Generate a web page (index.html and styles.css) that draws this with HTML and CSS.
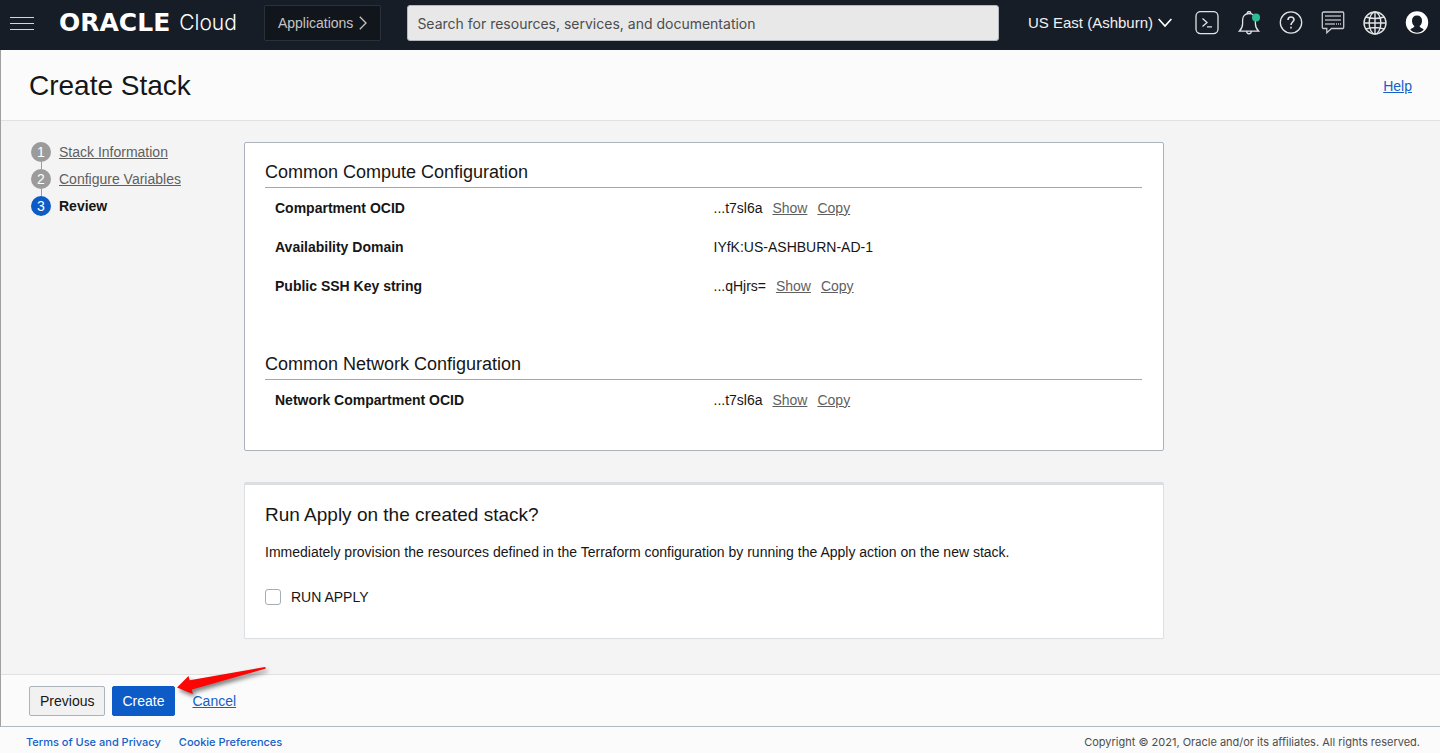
FILE: index.html
```html
<!DOCTYPE html>
<html lang="en">
<head>
<meta charset="utf-8">
<meta name="viewport" content="width=device-width, initial-scale=1">
<title>Create Stack</title>
<link rel="stylesheet" href="styles.css">
</head>
<body>
<header class="topbar">
  <button class="icon-btn menu-btn" type="button" aria-label="Navigation menu">
    <svg width="24" height="15" viewBox="0 0 24 15" fill="none" stroke="#d5d6d8"><path d="M0 1.500h24M0 7.500h24M0 13.500h24"/></svg>
  </button>
  <a class="brand" href="#"><span class="brand-name">ORACLE</span><span class="brand-product">Cloud</span></a>
  <button class="apps-btn" type="button">Applications
    <svg width="8" height="14" viewBox="0 0 8 14" fill="none" stroke="#c4c5c7" stroke-width="1.300"><path d="M.8.8 7 7 .8 13.200"/></svg>
  </button>
  <input class="search" type="search" aria-label="Search" placeholder="Search for resources, services, and documentation">
  <div class="tools">
    <button class="region-btn" type="button">US East (Ashburn)
      <svg width="14" height="10" viewBox="0 0 14 10" fill="none" stroke="#fff" stroke-width="1.700"><path d="m.6 1 6.400 7 6.400-7"/></svg>
    </button>
    <button class="icon-btn" type="button" aria-label="Cloud Shell">
      <svg width="24" height="24" viewBox="0 0 24 24" fill="none" stroke="#e2e3e5" stroke-width="1.300"><rect x="1" y=".6" width="22" height="22" rx="4.500"/><path d="m7.500 7.500 4.500 4-4.500 4M12 15.800h5"/></svg>
    </button>
    <button class="icon-btn" type="button" aria-label="Announcements">
      <svg width="24" height="24" viewBox="0 0 24 24" fill="none" stroke="#e2e3e5" stroke-width="1.300"><path d="M2.300 20.200h19.400c-2-2-3.300-4.500-3.300-7.500V9c0-3.700-2.300-6.500-6.400-6.500S5.600 5.300 5.600 9v3.700c0 3-1.300 5.500-3.300 7.500ZM10.200 2.500c0-2.600 3.600-2.600 3.600 0M9.700 20.500c.2 3 4.400 3 4.600 0"/><circle cx="19" cy="6.500" r="4" fill="#2dbd96" stroke="none"/></svg>
    </button>
    <button class="icon-btn" type="button" aria-label="Help menu">
      <svg width="24" height="24" viewBox="0 0 24 24" fill="none" stroke="#e2e3e5" stroke-width="1.300"><circle cx="12" cy="11.500" r="10.700"/><path stroke-width="1.600" d="M9 9c0-4 6-4 6-.4 0 2.300-3 2.600-3 5.300M12 15.700v1.700"/></svg>
    </button>
    <button class="icon-btn" type="button" aria-label="Feedback">
      <svg width="24" height="24" viewBox="0 0 24 24" fill="none" stroke="#c9cacd" stroke-width="1.300"><path d="M2.500 1h19.200q1 0 1 1.300v13.900q0 1.300-1 1.300H10.500L5.800 21.800v-4.300H2.500q-1.200 0-1.200-1.300V2.300Q1.300 1 2.500 1Z"/><path stroke="#a9abb0" stroke-width="1.600" d="M4 5h16M4 9h16M4 13h10"/><path stroke-dasharray="1 1" d="M15 13h5"/></svg>
    </button>
    <button class="icon-btn" type="button" aria-label="Language">
      <svg width="24" height="24" viewBox="0 0 24 24" fill="none" stroke="#e2e3e5" stroke-width="1.400"><circle cx="12" cy="12" r="11"/><ellipse cx="12" cy="12" rx="5.800" ry="11"/><path d="M12 1v22M1 12h22M3 6q9 3 18 0M3 18q9-3 18 0"/></svg>
    </button>
    <button class="icon-btn" type="button" aria-label="Profile">
      <svg width="24" height="24" viewBox="0 0 24 24"><circle cx="12" cy="11.500" r="11.200" fill="#fff"/><path fill="#171d27" d="M12 4.500c-3.200 0-5 2-5 5.200 0 2.300 1 4.300 2.500 5.400-.3 1.800-2.700 2-4.300 3.600A9.500 9.500 0 0 0 12 21.800a9.500 9.500 0 0 0 6.800-3.100c-1.600-1.600-4-1.800-4.300-3.600 1.500-1.100 2.500-3.100 2.500-5.400 0-3.200-1.800-5.200-5-5.200Z"/></svg>
    </button>
  </div>
</header>

<div class="page">
  <div class="page-head">
    <h1>Create Stack</h1>
    <a class="link" href="#">Help</a>
  </div>

  <div class="workspace">
    <nav aria-label="Steps">
      <ol class="steps">
        <li><span class="step-num">1</span><a href="#">Stack Information</a></li>
        <li><span class="step-num">2</span><a href="#">Configure Variables</a></li>
        <li class="current" aria-current="step"><span class="step-num">3</span><strong>Review</strong></li>
      </ol>
    </nav>

    <main class="content">
      <div class="card review">
        <section class="group">
          <h2>Common Compute Configuration</h2>
          <dl>
            <div class="row"><dt>Compartment OCID</dt><dd>...t7sl6a <a href="#">Show</a><a href="#">Copy</a></dd></div>
            <div class="row"><dt>Availability Domain</dt><dd>IYfK:US-ASHBURN-AD-1</dd></div>
            <div class="row"><dt>Public SSH Key string</dt><dd>...qHjrs= <a href="#">Show</a><a href="#">Copy</a></dd></div>
          </dl>
        </section>
        <section class="group">
          <h2>Common Network Configuration</h2>
          <dl>
            <div class="row"><dt>Network Compartment OCID</dt><dd>...t7sl6a <a href="#">Show</a><a href="#">Copy</a></dd></div>
          </dl>
        </section>
      </div>

      <section class="card apply">
        <h2>Run Apply on the created stack?</h2>
        <p>Immediately provision the resources defined in the Terraform configuration by running the Apply action on the new stack.</p>
        <label class="check"><input type="checkbox">RUN APPLY</label>
      </section>
    </main>
  </div>

  <div class="actions">
    <button class="btn" type="button">Previous</button>
    <button class="btn primary" type="button">Create</button>
    <a class="link" href="#">Cancel</a>
    <svg class="arrow" width="96" height="32" viewBox="0 0 96 32" aria-hidden="true"><path fill="#fb0505" d="M1 21.500 12.500 10l1.200 4.300L89 1l1 1.500L15.800 23.500l1 4.500Z"/></svg>
  </div>
</div>

<footer class="footer">
  <div class="footer-links"><a href="#">Terms of Use and Privacy</a><a href="#">Cookie Preferences</a></div>
  <span>Copyright © 2021, Oracle and/or its affiliates. All rights reserved.</span>
</footer>
</body>
</html>
```
FILE: styles.css
```css
* { box-sizing: border-box; }

body {
  margin: 0;
  min-height: 100vh;
  display: flex;
  flex-direction: column;
  background: #fbfbfb;
  color: #161616;
  font: 14px/20px "Liberation Sans", Arial, sans-serif;
}

button, input { font: inherit; }
h1, h2, p, ol, dl, dd { margin: 0; padding: 0; font-weight: 400; }
svg { display: block; }
.link { color: #145fc8; }

.topbar {
  display: flex;
  align-items: center;
  height: 50px;
  padding: 0 11px 4px 10px;
  background: #171d27;
}
.icon-btn, .region-btn { padding: 0; border: 0; background: none; }
.brand {
  display: flex;
  align-items: center;
  gap: 9px;
  margin: 0 27px 0 25px;
  color: #fff;
  text-decoration: none;
}
.brand-name { font: 700 25px/28px "DejaVu Sans", sans-serif; }
.brand-product { font: 300 21px/28px Inter, sans-serif; }
.apps-btn {
  display: flex;
  align-items: center;
  gap: 6px;
  height: 36px;
  padding: 0 13px;
  border: 1px solid #2b313a;
  border-radius: 2px;
  background: #11151c;
  color: #c4c5c7;
}
.search {
  width: 592px;
  height: 36px;
  margin-left: 26px;
  padding: 0 9px;
  border: 1px solid #b4b8bf;
  border-radius: 3px;
  background: #e8e8e8;
  font: 14px/20px Inter, sans-serif;
}
.search::placeholder { color: #4d4d4d; opacity: 1; }
.tools {
  display: flex;
  align-items: center;
  gap: 18px;
  margin-left: auto;
}
.region-btn {
  display: flex;
  align-items: center;
  gap: 5px;
  margin-right: 5px;
  color: #f1f1f2;
  font-size: 15px;
}

.page {
  flex: 1;
  display: flex;
  flex-direction: column;
  border-left: 1px solid #a0a0a0;
  border-bottom: 1px solid #b1b8bf;
}
.page-head {
  display: flex;
  align-items: center;
  justify-content: space-between;
  height: 71px;
  padding: 2px 28px 0;
  border-bottom: 1px solid #e1e1e1;
}
h1 { font-size: 28px; line-height: 36px; }
h2 { font-size: 18px; line-height: 24px; }

.workspace {
  flex: 1;
  display: flex;
  padding: 21px 28px 34px 30px;
  background: #f4f4f4;
}
nav { flex: 0 0 213px; }
.steps { list-style: none; }
.steps li {
  display: flex;
  align-items: center;
  gap: 8px;
  height: 20px;
  margin-bottom: 7px;
}
.steps a, dd a { color: #5f5f5f; }
.step-num {
  position: relative;
  width: 20px;
  height: 20px;
  border-radius: 50%;
  background: #9b9b9b;
  color: #fff;
  text-align: center;
}
.steps li:not(:last-child) .step-num::after {
  content: "";
  position: absolute;
  top: 20px;
  left: 10px;
  width: 1px;
  height: 7px;
  background: #9b9b9b;
}
.steps .current .step-num { background: #0c5bc6; }

.content {
  flex: 1;
  display: flex;
  flex-direction: column;
  gap: 31px;
  max-width: 920px;
}
.card {
  padding: 17px 21px 31px 20px;
  border: 1px solid #acb3bb;
  border-radius: 2px;
  background: #fff;
}
.group + .group { margin-top: 47px; }
.group h2 { padding-bottom: 3px; border-bottom: 1px solid #a7a7a7; }
.row {
  display: grid;
  grid-template-columns: 1fr 1fr;
  align-items: center;
  height: 39px;
}
dt, dd { padding: 0 10px; }
dt { font-weight: 700; }
dd a { margin-left: 6px; }
dd a + a { margin-left: 10px; }

.apply {
  padding-top: 18px;
  border-color: #dcdfe2;
  border-top-width: 3px;
}
.apply h2 { font-size: 19px; }
.apply p { margin: 15px 0 25px; }
.check {
  display: flex;
  align-items: center;
  gap: 10px;
}
.check input {
  appearance: none;
  width: 16px;
  height: 16px;
  margin: 0;
  border: 1px solid #a5adb6;
  border-radius: 3px;
  background: #fff;
}
.check input:checked { background: #0c5bc6; }

.actions {
  position: relative;
  display: flex;
  align-items: center;
  gap: 7px;
  height: 52px;
  padding: 0 28px;
  border-top: 1px solid #e1e1e1;
}
.btn {
  height: 30px;
  padding: 0 10px;
  border: 1px solid #acb3bb;
  border-radius: 2px;
  background: #f1f1f1;
  color: #161616;
}
.btn.primary { padding: 0 9px; border-color: #0c5bc6; background: #0c5bc6; color: #fff; }
.actions .link { margin-left: 11px; }
.arrow {
  position: absolute;
  top: -9px;
  left: 175px;
  filter: drop-shadow(2px 3px 2px rgba(0, 0, 0, .5));
}

.footer {
  display: flex;
  align-items: center;
  justify-content: space-between;
  height: 26px;
  padding: 4px 20px 0 26px;
  color: #4d4d4d;
  font: 11px/16px Inter, sans-serif;
}
.footer-links { display: flex; gap: 18px; font-weight: 500; }
.footer a { color: #145fc8; text-decoration: none; }
```
